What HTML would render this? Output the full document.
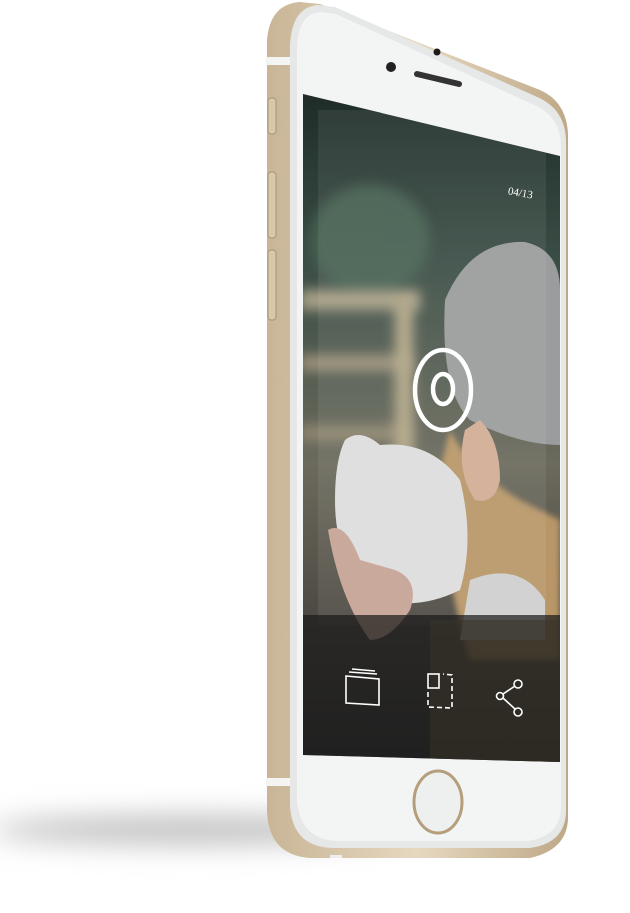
<!DOCTYPE html>
<html><head><meta charset="utf-8"><style>
html,body{margin:0;padding:0;background:#fff;width:630px;height:913px;overflow:hidden}
svg{display:block}
</style></head><body>
<svg width="630" height="913" viewBox="0 0 630 913" xmlns="http://www.w3.org/2000/svg">
<defs>
<filter id="blur" filterUnits="userSpaceOnUse" x="-100" y="700" width="800" height="250"><feGaussianBlur stdDeviation="14"/></filter>
<filter id="b6" filterUnits="userSpaceOnUse" x="250" y="80" width="350" height="700"><feGaussianBlur stdDeviation="6"/></filter>
<filter id="b3" filterUnits="userSpaceOnUse" x="250" y="80" width="350" height="700"><feGaussianBlur stdDeviation="3"/></filter>
<linearGradient id="gold" x1="0" x2="1" y1="0" y2="0">
<stop offset="0" stop-color="#c9b596"/><stop offset="0.5" stop-color="#e6d8c0"/><stop offset="1" stop-color="#bfa887"/></linearGradient>
<linearGradient id="bg" x1="0" y1="0" x2="0" y2="1">
<stop offset="0" stop-color="#1e2b27"/><stop offset="0.25" stop-color="#3a4d45"/><stop offset="0.55" stop-color="#6b6a5c"/><stop offset="0.8" stop-color="#4a4640"/><stop offset="1" stop-color="#2a2a2a"/></linearGradient>
<clipPath id="scr"><path d="M303 94 L560 156 L560 762 L303 755 Z"/></clipPath>
</defs>
<ellipse cx="190" cy="830" rx="200" ry="14" fill="#bdbdbd" filter="url(#blur)"/>
<!-- gold body -->
<path d="M300 2 Q270 4 267 40 L267 810 Q268 855 310 858 L530 858 Q566 850 568 820 L568 135 Q567 102 540 90 L320 4 Z" fill="url(#gold)"/>
<rect x="266" y="57" width="24" height="8" fill="#f4f4f2"/>
<rect x="266" y="778" width="24" height="8" fill="#f4f4f2"/>
<rect x="268" y="98" width="8" height="36" rx="3" fill="#d8c8ab" stroke="#a89474" stroke-width="1"/>
<rect x="268" y="172" width="8" height="66" rx="3" fill="#d8c8ab" stroke="#a89474" stroke-width="1"/>
<rect x="268" y="250" width="8" height="70" rx="3" fill="#d8c8ab" stroke="#a89474" stroke-width="1"/>
<!-- white face -->
<path d="M318 5 Q292 7 290 45 L290 805 Q292 848 335 848 L530 848 Q565 843 566 812 L566 140 Q565 108 535 96 L335 7 Z" fill="#e6e8e8"/>
<path d="M320 12 Q298 14 297 48 L297 800 Q300 840 338 841 L528 841 Q560 836 561 808 L561 145 Q560 115 532 104 L336 14 Z" fill="#f3f4f4"/>
<circle cx="437" cy="52" r="3.5" fill="#1a1a1a"/>
<circle cx="391" cy="67" r="5" fill="#222"/>
<path d="M417 74 L459 84" stroke="#333" stroke-width="6" stroke-linecap="round"/>
<!-- screen -->
<g clip-path="url(#scr)">
<rect x="300" y="90" width="265" height="680" fill="url(#bg)"/>
<ellipse cx="370" cy="240" rx="60" ry="55" fill="#4a6654" filter="url(#b6)" opacity="0.8"/>
<rect x="300" y="290" width="120" height="20" fill="#a8a086" filter="url(#b6)"/>
<rect x="300" y="355" width="110" height="16" fill="#9c927a" filter="url(#b6)"/>
<rect x="300" y="425" width="110" height="16" fill="#8f8670" filter="url(#b6)"/>
<rect x="395" y="300" width="18" height="170" fill="#b3a888" filter="url(#b6)"/>
<path d="M450 430 Q470 470 520 500 L560 520 L560 660 L470 660 Q440 560 440 470 Z" fill="#b89668" filter="url(#b3)"/>
<path d="M445 300 Q470 240 525 242 Q560 250 560 290 L560 445 Q520 445 470 420 Q440 390 445 300 Z" fill="#9a9c9d"/>
<path d="M480 420 Q500 440 500 480 Q495 505 475 500 Q455 470 465 430 Z" fill="#d2ad95"/>
<path d="M345 440 Q360 428 380 445 Q430 440 460 480 Q475 540 460 590 Q420 610 380 600 Q335 570 335 500 Q335 460 345 440 Z" fill="#dddddd"/>
<path d="M328 530 Q345 520 360 560 L395 570 Q420 580 410 610 Q390 640 370 640 Q340 600 328 530 Z" fill="#c5a394"/>
<path d="M470 580 Q520 560 545 600 L545 640 L460 640 Z" fill="#cfcfcf"/>
<rect x="318" y="110" width="228" height="515" fill="#ffffff" opacity="0.07"/>
<rect x="300" y="615" width="265" height="160" fill="#1c1c1c" opacity="0.72"/>
<rect x="430" y="620" width="130" height="150" fill="#3a3428" opacity="0.5"/>
</g>
<text x="508" y="196" font-family="Liberation Serif, serif" font-size="11" fill="#fff" transform="rotate(10 518 192)">04/13</text>
<ellipse cx="443" cy="390" rx="28" ry="40" fill="none" stroke="#fff" stroke-width="4.5"/>
<ellipse cx="443" cy="389" rx="10" ry="15" fill="none" stroke="#fff" stroke-width="4.5"/>
<!-- icons -->
<g fill="none" stroke="#fff" stroke-width="1.6">
<path d="M346 676 L379 679 L379 705 L346 703 Z"/>
<path d="M349 672 L377 674"/>
<path d="M352 669 L375 671"/>
<rect x="428" y="674" width="11" height="14"/>
<path d="M428 692 L428 707 L452 708 L452 675 L443 674" stroke-dasharray="5 3"/>
<circle cx="518" cy="684" r="4"/>
<circle cx="500" cy="696" r="3.5"/>
<circle cx="518" cy="712" r="4"/>
<path d="M503 694 L515 686 M503 698 L515 709"/>
</g>
<!-- home button -->
<ellipse cx="438" cy="802" rx="24" ry="31" fill="#eef0ef" stroke="#b59e7c" stroke-width="3"/>
<rect x="330" y="855" width="12" height="3" fill="#eee"/>
</svg>
</body></html>
